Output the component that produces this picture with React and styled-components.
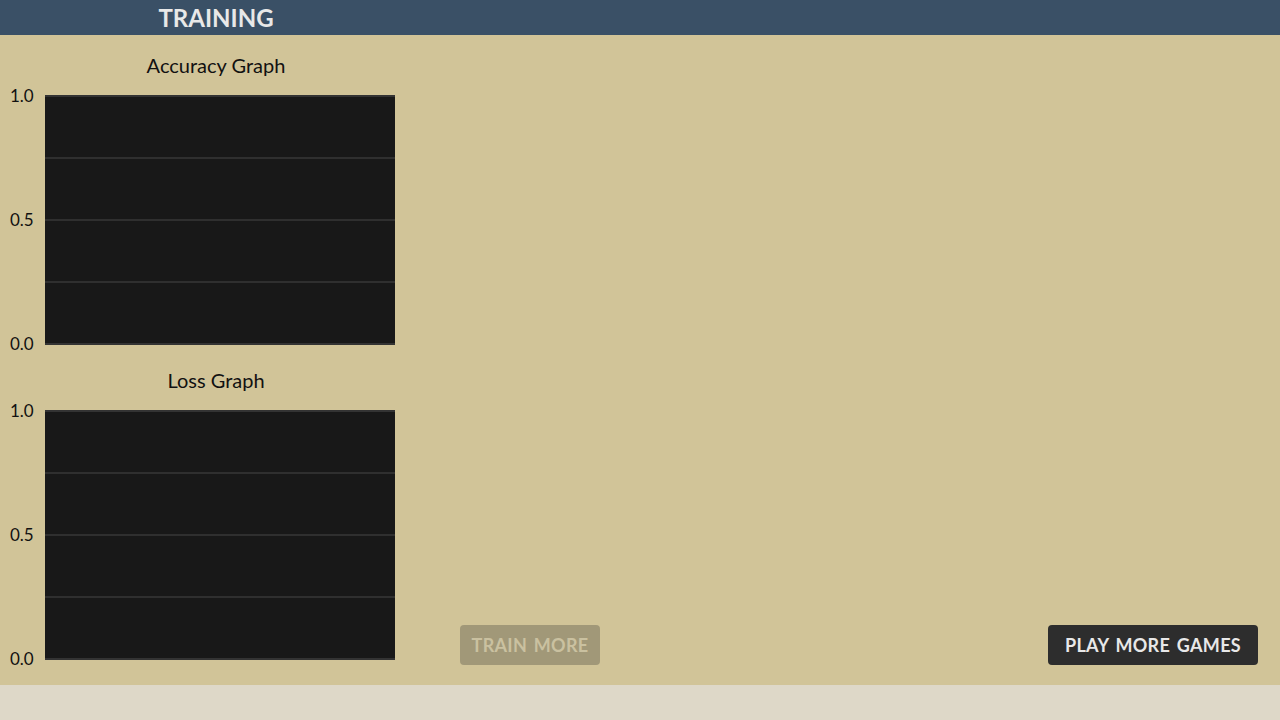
import React from "react";
import styled, { createGlobalStyle } from "styled-components";

const Global = createGlobalStyle`
  html, body { margin: 0; padding: 0; }
  body { font-family: Lato, "Open Sans", sans-serif; background: #ded8c8; }
  #root { height: 720px; }
`;

const Page = styled.div`
  width: 1280px;
  height: 720px;
  display: flex;
  flex-direction: column;
  background: #ded8c8;
`;

const Header = styled.header`
  height: 35px;
  flex: none;
  background: #3a5066;
  display: flex;
  align-items: center;
`;

const HeaderTitle = styled.h1`
  margin: 0;
  width: 432px;
  text-align: center;
  font-size: 24px;
  font-weight: 700;
  color: #e8e8e8;
  line-height: 35px;
`;

const Main = styled.main`
  height: 650px;
  flex: none;
  background: #d1c498;
  display: flex;
  align-items: flex-start;
`;

const Charts = styled.div`
  width: 432px;
  display: flex;
  flex-direction: column;
  gap: 5px;
`;

const Section = styled.section`
  display: flex;
  flex-direction: column;
`;

const ChartTitle = styled.div`
  height: 60px;
  box-sizing: border-box;
  padding-top: 19px;
  line-height: 22px;
  font-size: 20px;
  color: #111;
  text-align: center;
`;

const ChartRow = styled.div`
  display: flex;
`;

const Axis = styled.div`
  width: 45px;
  height: 266px;
  margin: -8px 0;
  box-sizing: border-box;
  padding-left: 10px;
  display: flex;
  flex-direction: column;
  justify-content: space-between;
  font-size: 17px;
  line-height: 18px;
  color: #111;
`;

const Plot = styled.div`
  width: 350px;
  height: 250px;
  box-sizing: border-box;
  background: #181818;
  border-top: 2px solid #333;
  border-bottom: 2px solid #333;
  display: flex;
  flex-direction: column;
  justify-content: space-evenly;
`;

const GridLine = styled.div`
  height: 2px;
  background: #2f2f2f;
`;

const Actions = styled.div`
  flex: 1;
  align-self: stretch;
  display: flex;
  align-items: flex-end;
  justify-content: space-between;
  padding: 0 22px 20px 28px;
`;

const Button = styled.button`
  width: ${(p) => p.$width}px;
  height: 40px;
  box-sizing: border-box;
  border: none;
  border-radius: 4px;
  padding: 0;
  font-family: Lato, "Open Sans", sans-serif;
  font-size: 18px;
  font-weight: 700;
  letter-spacing: 0.3px;
  word-spacing: 2px;
  text-align: center;
  background: ${(p) => (p.$disabled ? "#a19878" : "#2d2d2d")};
  color: ${(p) => (p.$disabled ? "#cac1a0" : "#e8e8e8")};
  cursor: ${(p) => (p.$disabled ? "default" : "pointer")};
`;

const Footer = styled.footer`
  flex: 1;
  background: #ded8c8;
`;

function Chart({ title }) {
  return (
    <Section>
      <ChartTitle>{title}</ChartTitle>
      <ChartRow>
        <Axis>
          <span>1.0</span>
          <span>0.5</span>
          <span>0.0</span>
        </Axis>
        <Plot>
          <GridLine />
          <GridLine />
          <GridLine />
        </Plot>
      </ChartRow>
    </Section>
  );
}

export default function App() {
  return (
    <Page>
      <Global />
      <Header>
        <HeaderTitle>TRAINING</HeaderTitle>
      </Header>
      <Main>
        <Charts>
          <Chart title="Accuracy Graph" />
          <Chart title="Loss Graph" />
        </Charts>
        <Actions>
          <Button $disabled $width={140}>TRAIN MORE</Button>
          <Button $width={210}>PLAY MORE GAMES</Button>
        </Actions>
      </Main>
      <Footer />
    </Page>
  );
}
